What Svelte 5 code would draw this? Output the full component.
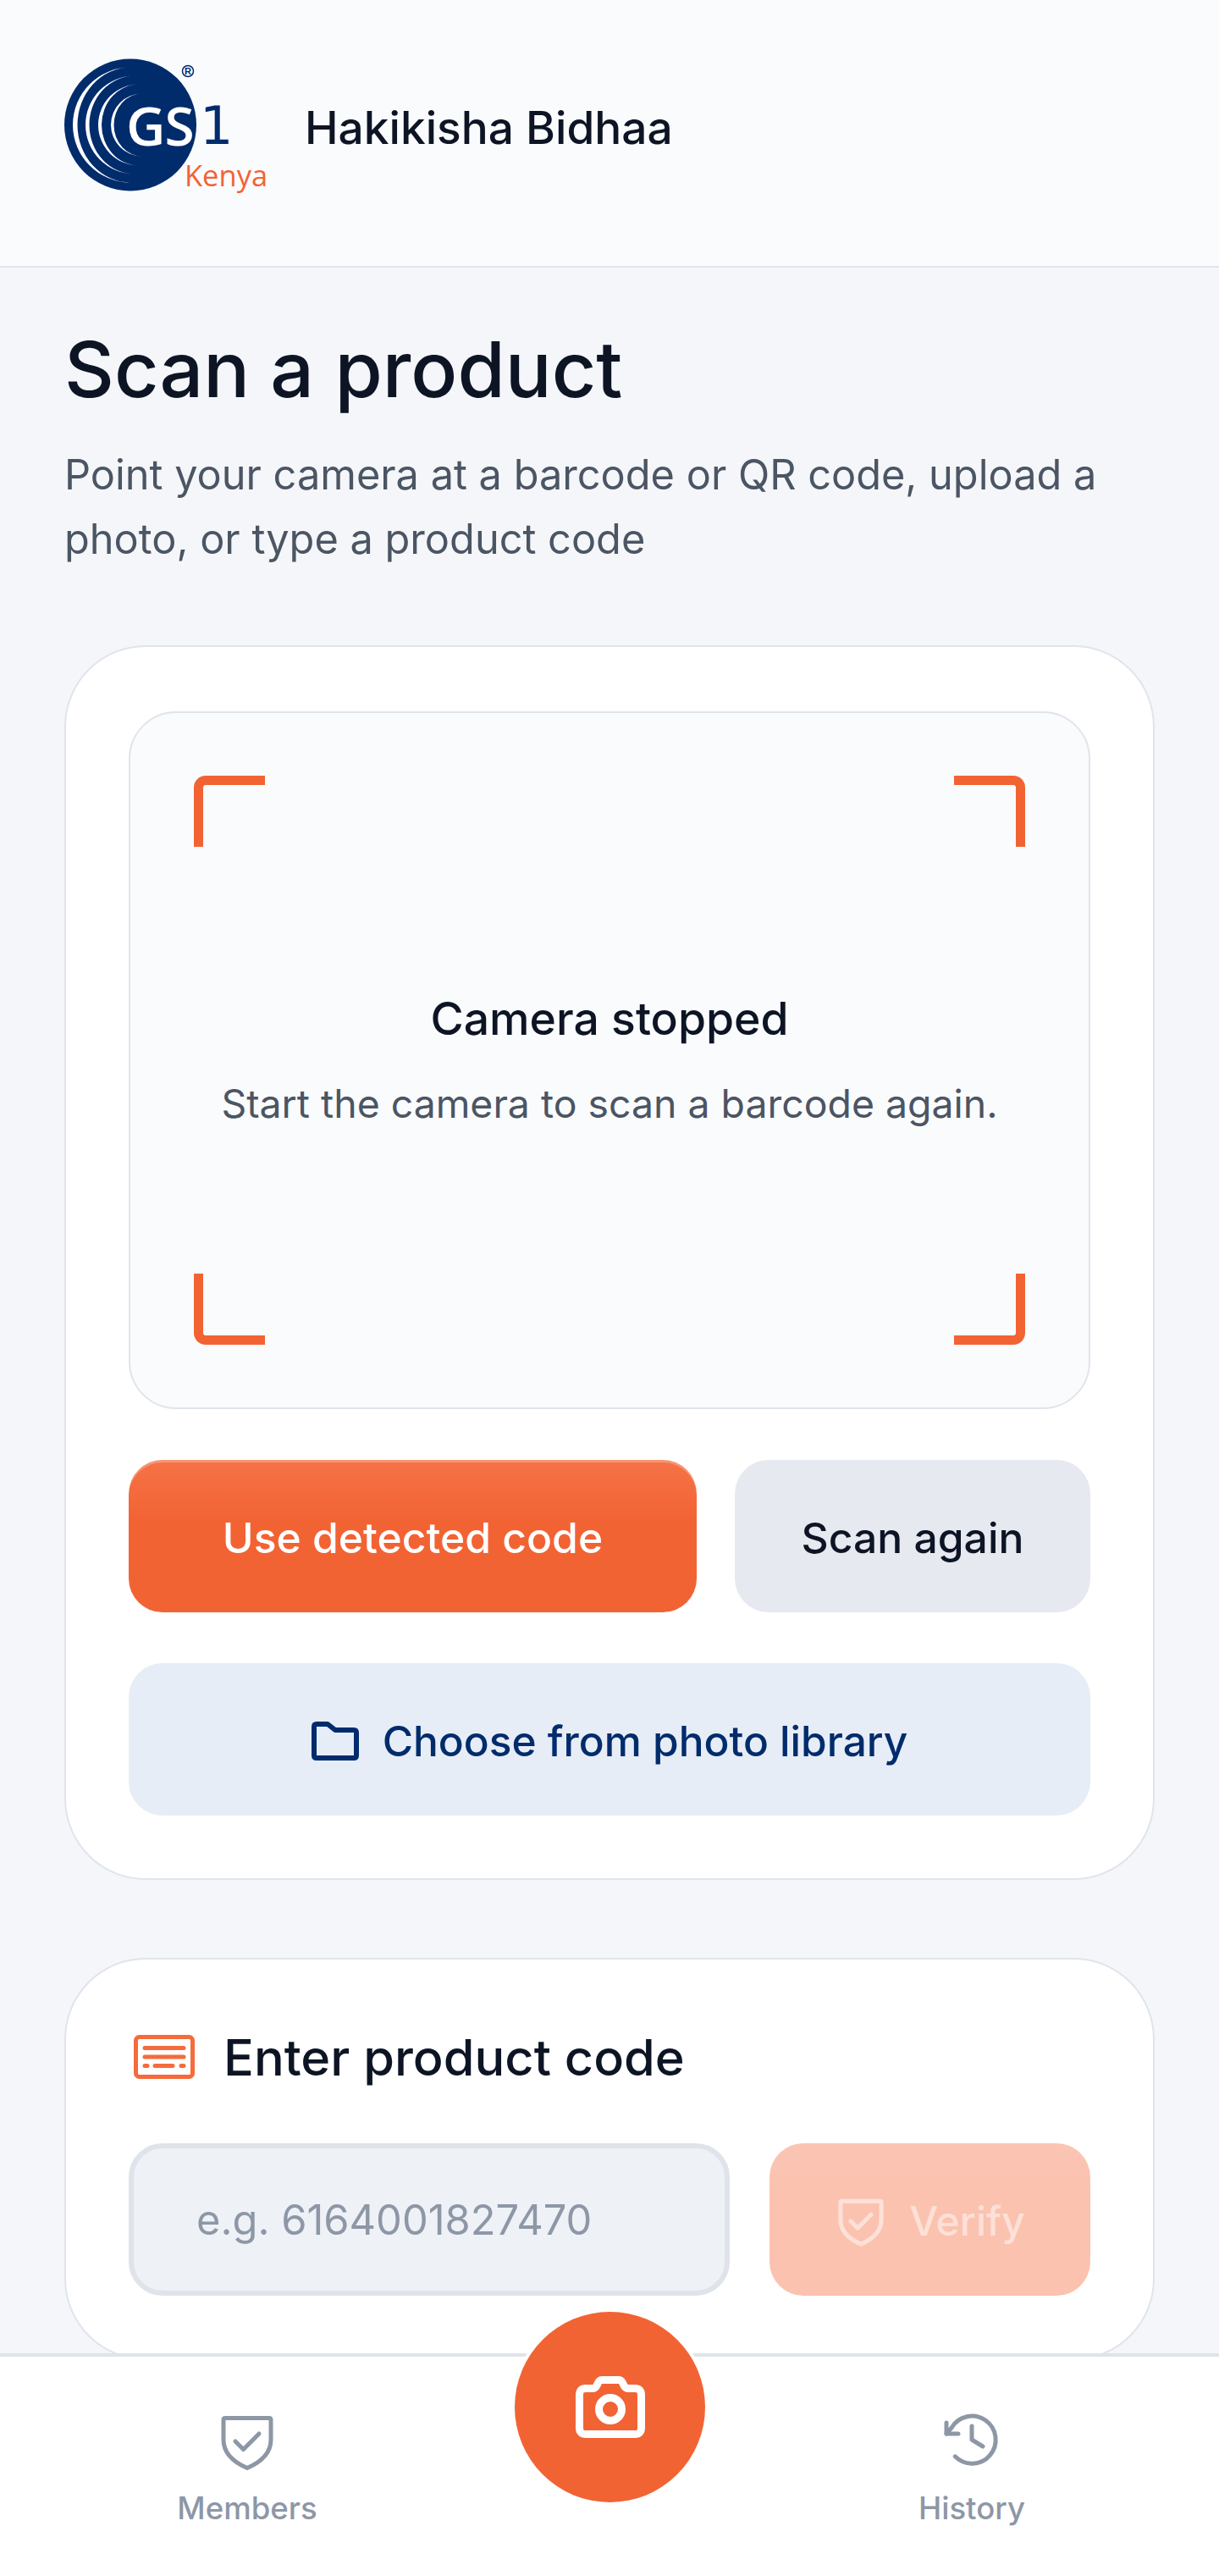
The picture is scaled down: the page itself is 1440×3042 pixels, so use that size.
<svelte:options runes={true} />

<script lang="ts">
  let code = $state("");
</script>

{#snippet shield()}
  <path d="M10 8.5H62Q64 8.5 64 10.5V34C64 50 51 61 36 67.5C21 61 8 50 8 34V10.5Q8 8.5 10 8.5Z" />
  <path d="M22 36L31.5 45.5L50 27" />
{/snippet}

<div class="page">
  <header class="top">
    <svg class="logo" width="246" height="172" viewBox="0 0 246 172" role="img" aria-label="GS1 Kenya">
      <circle cx="78" cy="79.500" r="78" fill="#002c6c" />
      <g fill="#fff">
        <path d="M78 11.500A68 68 0 0 0 78 147.500A62.500 68 0 0 1 78 11.500Z" />
        <path d="M83 21.500A58 58 0 0 0 83 137.500A53.500 58 0 0 1 83 21.500Z" />
        <path d="M88 31.500A48 48 0 0 0 88 127.500A44 48 0 0 1 88 31.500Z" />
        <path d="M92 42.500A37 37 0 0 0 92 116.500A33.500 37 0 0 1 92 42.500Z" />
      </g>
      <text class="gs" x="73" y="104">GS</text>
      <text class="one" x="160" y="102">1</text>
      <text class="kenya" x="142" y="152">Kenya</text>
      <circle cx="146" cy="16" r="6.500" fill="none" stroke="#002c6c" stroke-width="1.500" />
      <text class="reg" x="146" y="20">R</text>
    </svg>
    <span class="brand">Hakikisha Bidhaa</span>
  </header>

  <main class="content">
    <h1>Scan a product</h1>
    <p class="lead">Point your camera at a barcode or QR code, upload a photo, or type a product code</p>

    <section class="card">
      <div class="viewfinder">
        <span class="corner tl"></span>
        <span class="corner tr"></span>
        <span class="corner bl"></span>
        <span class="corner br"></span>
        <div class="vf-title">Camera stopped</div>
        <div class="vf-text">Start the camera to scan a barcode again.</div>
      </div>

      <div class="actions">
        <button class="btn primary">Use detected code</button>
        <button class="btn grey">Scan again</button>
      </div>

      <button class="btn library">
        <svg width="56" height="46" viewBox="0 0 56 46" fill="none" stroke="currentColor" stroke-width="6" stroke-linejoin="round">
          <path d="M3 6Q3 3 6 3H19L28 10H50Q53 10 53 13V40Q53 43 50 43H6Q3 43 3 40Z" />
        </svg>
        Choose from photo library
      </button>
    </section>

    <section class="card code-card">
      <div class="code-title">
        <svg width="72" height="52" viewBox="0 0 72 52" fill="none" stroke="#f56b3b" stroke-width="5" stroke-linecap="round" stroke-linejoin="round">
          <rect x="2.500" y="2.500" width="67" height="47" rx="4" />
          <path d="M13 15.500H59M13 26H59M13 36.500H16M25 36.500H46M56 36.500H59" />
        </svg>
        <h2>Enter product code</h2>
      </div>
      <div class="code-row">
        <input bind:value={code} placeholder="e.g. 6164001827470" />
        <button class="btn verify" disabled>
          <svg width="62" height="62" viewBox="0 0 72 72" fill="none" stroke="currentColor" stroke-width="6" stroke-linecap="round" stroke-linejoin="round">
            {@render shield()}
          </svg>
          Verify
        </button>
      </div>
    </section>
  </main>

  <nav class="bottom">
    <div class="tab">
      <svg width="72" height="72" viewBox="0 0 72 72" fill="none" stroke="currentColor" stroke-width="5" stroke-linecap="round" stroke-linejoin="round">
        {@render shield()}
      </svg>
      <span>Members</span>
    </div>
    <div></div>
    <div class="tab">
      <svg width="72" height="72" viewBox="0 0 72 72" fill="none" stroke="currentColor" stroke-width="5" stroke-linecap="round" stroke-linejoin="round">
        <path d="M6 14V27H20" />
        <path d="M6 27L12 20A28 28 0 1 1 16.200 53.800" />
        <path d="M36 18V34L49 42" />
      </svg>
      <span>History</span>
    </div>
    <button class="fab" aria-label="Scan">
      <svg width="82" height="73" viewBox="0 0 82 73" fill="none" stroke="#fff" stroke-width="9" stroke-linejoin="round">
        <path d="M12 14.500H20Q23 14.500 25 11L27 7Q28.500 4.500 31 4.500H51Q53.500 4.500 55 7L57 11Q59 14.500 62 14.500H70Q77.500 14.500 77.500 22V61Q77.500 68.500 70 68.500H12Q4.500 68.500 4.500 61V22Q4.500 14.500 12 14.500Z" />
        <circle cx="41" cy="39" r="13.500" />
      </svg>
    </button>
  </nav>
</div>

<style>
  :global(body) {
    margin: 0;
    background: #f4f6f9;
  }

  .page {
    display: flex;
    flex-direction: column;
    height: 3042px;
    overflow: hidden;
    font-family: Inter, "Liberation Sans", sans-serif;
    color: #0d1525;
  }

  .top {
    flex: none;
    box-sizing: border-box;
    display: flex;
    align-items: center;
    gap: 40px;
    height: 316px;
    padding: 0 76px 14px;
    background: #fafbfd;
    border-bottom: 2px solid #e0e4ec;
  }

  .logo {
    margin-top: 8px;
    margin-right: -2px;
  }

  .gs {
    font: 600 64px "Open Sans", sans-serif;
    letter-spacing: -1px;
    fill: #fff;
  }

  .one {
    font: 400 62px "DejaVu Sans", sans-serif;
    fill: #002c6c;
  }

  .kenya {
    font: 500 34.500px "Open Sans", sans-serif;
    fill: #f26334;
  }

  .reg {
    font: 700 11px "Liberation Sans", sans-serif;
    fill: #002c6c;
    text-anchor: middle;
  }

  .brand {
    font-size: 53.200px;
    font-weight: 450;
  }

  .content {
    flex: 1;
    min-height: 0;
    overflow: hidden;
    padding: 68px 76px 0;
  }

  h1 {
    margin: 0;
    font-size: 91.200px;
    font-weight: 450;
    line-height: 104px;
  }

  .lead {
    margin: 35px 0 87px;
    font-size: 48.700px;
    line-height: 76px;
    color: #4b5563;
  }

  .card {
    box-sizing: border-box;
    padding: 76px 74px 74px;
    background: #fff;
    border: 2px solid #e0e4ec;
    border-radius: 96px;
  }

  .viewfinder {
    position: relative;
    box-sizing: border-box;
    display: flex;
    flex-direction: column;
    align-items: center;
    justify-content: center;
    height: 824px;
    padding-top: 4px;
    background: #fafbfd;
    border: 2px solid #e0e4ec;
    border-radius: 56px;
  }

  .corner {
    position: absolute;
    width: 84px;
    height: 84px;
    box-sizing: border-box;
    border: 0 solid #f26334;
  }

  .tl {
    top: 74px;
    left: 75px;
    border-width: 11px 0 0 11px;
    border-top-left-radius: 14px;
  }

  .tr {
    top: 74px;
    right: 75px;
    border-width: 11px 11px 0 0;
    border-top-right-radius: 14px;
  }

  .bl {
    bottom: 74px;
    left: 75px;
    border-width: 0 0 11px 11px;
    border-bottom-left-radius: 14px;
  }

  .br {
    bottom: 74px;
    right: 75px;
    border-width: 0 11px 11px 0;
    border-bottom-right-radius: 14px;
  }

  .vf-title {
    font-size: 53.500px;
    font-weight: 450;
    line-height: 68px;
    margin-bottom: 30px;
  }

  .vf-text {
    font-size: 46.400px;
    line-height: 72px;
    color: #4b5563;
  }

  .actions {
    display: flex;
    gap: 45px;
    margin: 60px 0;
  }

  .btn {
    display: flex;
    align-items: center;
    justify-content: center;
    height: 180px;
    padding: 3px 0 0;
    border: none;
    border-radius: 40px;
    font-family: inherit;
    font-size: 49.800px;
    font-weight: 450;
  }

  .primary {
    flex: 1;
    color: #fff;
    background: linear-gradient(#f57347, #f26334 40%);
    box-shadow: inset 0 3px 0 rgba(255, 255, 255, 0.25);
  }

  .grey {
    flex: none;
    width: 420px;
    color: #0d1525;
    background: #e6e9ef;
  }

  .library {
    width: 100%;
    gap: 28px;
    font-size: 49.600px;
    color: #002c6c;
    background: #e7edf6;
  }

  .code-card {
    margin-top: 92px;
  }

  .code-title {
    display: flex;
    align-items: center;
    gap: 34px;
    height: 78px;
    margin: 0 0 63px 6px;
  }

  h2 {
    margin: 0;
    font-size: 59.500px;
    font-weight: 450;
  }

  .code-row {
    display: flex;
    gap: 47px;
  }

  input {
    flex: 1;
    min-width: 0;
    box-sizing: border-box;
    height: 180px;
    padding: 0 74px;
    background: #eef1f6;
    border: 6px solid #dfe3ea;
    border-radius: 40px;
    font-family: inherit;
    font-size: 48.800px;
    color: #0d1525;
    outline: none;
  }

  input::placeholder {
    color: #8d97a6;
    opacity: 1;
  }

  .verify {
    flex: none;
    width: 379px;
    gap: 26px;
    font-size: 48px;
    color: #fde0d7;
    background: linear-gradient(#fbc5b3, #fbc2b0 30%);
  }

  .bottom {
    position: relative;
    flex: none;
    box-sizing: border-box;
    display: grid;
    grid-template-columns: repeat(3, 1fr);
    height: 263px;
    padding: 64px 78px 0;
    background: #fff;
    border-top: 4px solid #dfe3ea;
  }

  .tab {
    display: flex;
    flex-direction: column;
    align-items: center;
    gap: 19px;
    color: #8d97a6;
    font-size: 36.600px;
    font-weight: 450;
    line-height: 48px;
  }

  .fab {
    position: absolute;
    top: -53px;
    left: 608px;
    display: flex;
    align-items: center;
    justify-content: center;
    width: 225px;
    height: 225px;
    padding: 0;
    border: none;
    border-radius: 50%;
    background: #f26334;
    box-shadow: 0 0 0 4px #fff;
  }
</style>
